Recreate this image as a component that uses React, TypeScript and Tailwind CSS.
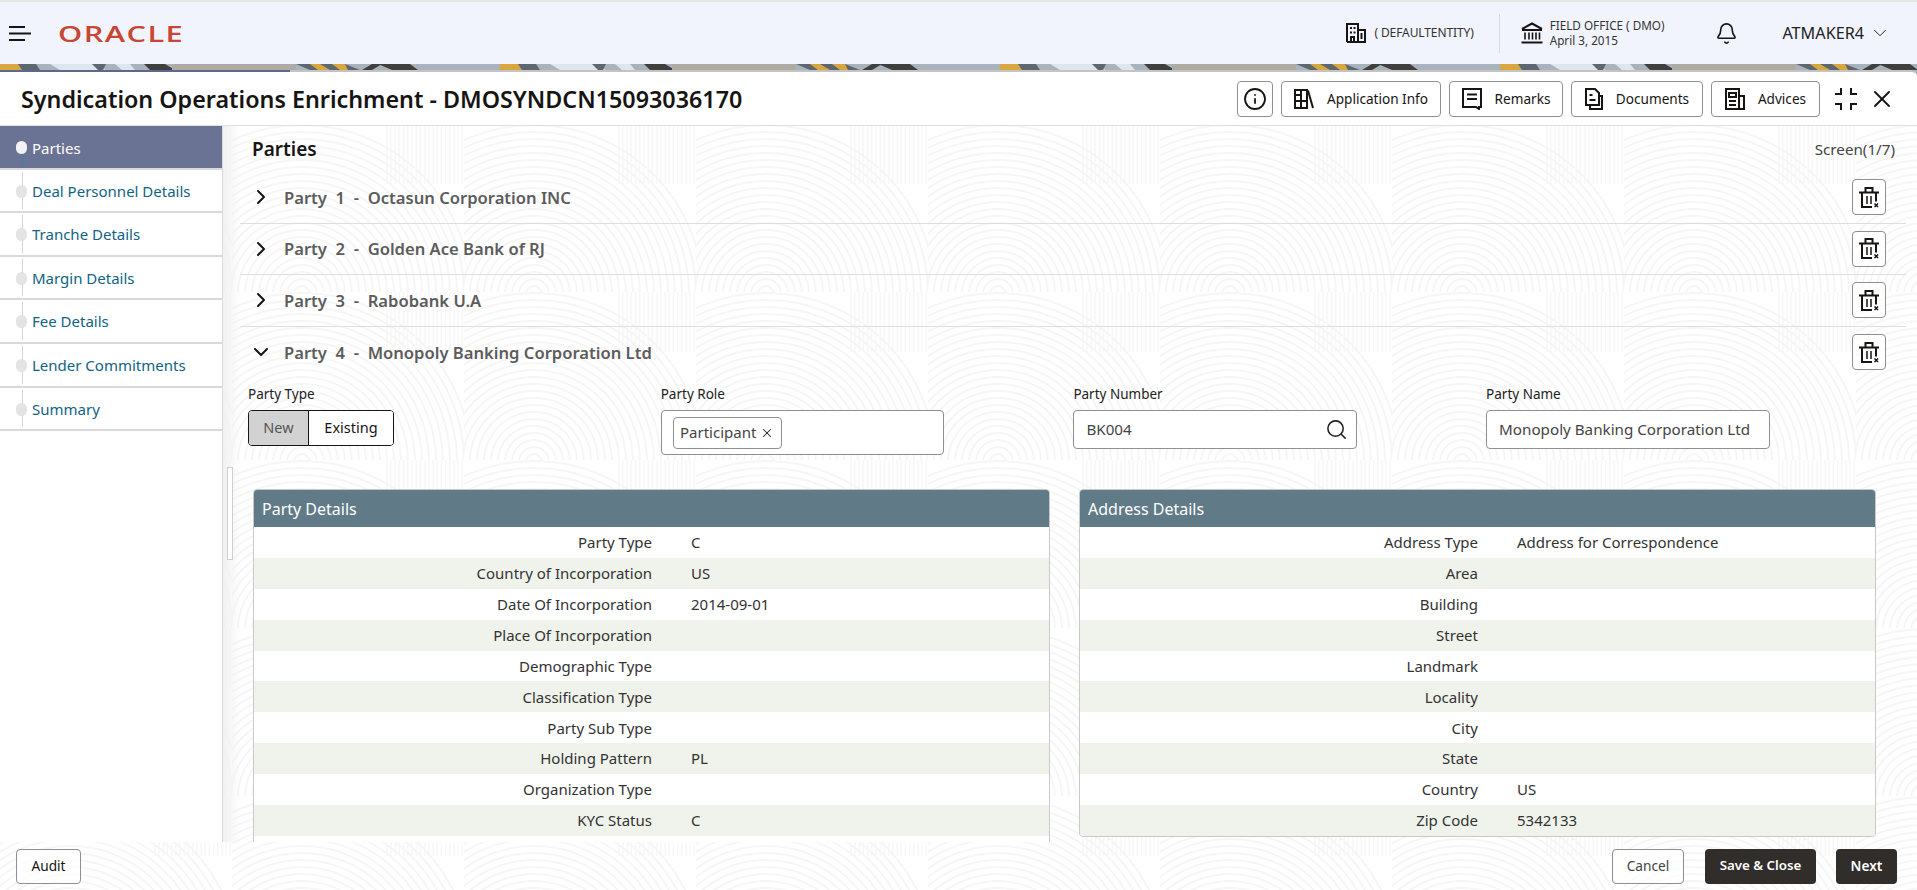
import React from 'react'
import { Bell, ChevronDown, ChevronRight, Info, Search, X } from 'lucide-react'

const radii = Array.from({ length: 24 }, (_, i) => 8 + i * 7)

// the faint fingerprint watermark behind the form
const Watermark = () => (
  <svg className="absolute inset-0 w-full h-full" aria-hidden="true">
    <defs>
      <pattern id="print" width="232" height="168" patternUnits="userSpaceOnUse" y="-2">
        <g fill="none" stroke="#f6f6f6" strokeWidth="2">
          {radii.map(r => <circle key={r} cx="70" cy="170" r={r} />)}
        </g>
        <g stroke="#f7f7f7" strokeWidth="1.5">
          {radii.map(r => <line key={r} x1={150 + r * 0.6} y1="0" x2={150 + r * 0.6} y2="60" />)}
        </g>
      </pattern>
    </defs>
    <rect width="100%" height="100%" fill="url(#print)" />
  </svg>
)

const Strip = () => (
  <svg className="w-full h-[6px] block" aria-hidden="true">
    <defs>
      <pattern id="strip" width="500" height="6" patternUnits="userSpaceOnUse">
        <rect width="500" height="6" fill="#a9b3bd" />
        <polygon points="0,0 18,0 22,6 0,6" fill="#d9a73f" />
        <polygon points="18,0 36,0 40,6 22,6" fill="#5c6770" />
        <polygon points="50,0 92,0 106,6 60,6" fill="#dbe6ef" />
        <polygon points="92,0 106,0 103,6 98,6" fill="#5c6770" />
        <polygon points="115,0 130,0 135,6 122,6" fill="#dbe6ef" />
        <polygon points="144,0 165,0 175,6 150,6" fill="#3f3f3f" />
        <rect x="172" width="124" height="6" fill="#aeaaa4" />
        <polygon points="296,0 345,0 360,6 310,6" fill="#5c6770" />
        <polygon points="310,0 320,0 330,6 318,6" fill="#d9a73f" />
        <polygon points="332,0 345,0 348,6 340,6" fill="#d9a73f" />
        <polygon points="362,6 372,0 382,0 372,6" fill="#3f3f3f" />
        <polygon points="378,0 410,0 418,6 392,6" fill="#3f3f3f" />
      </pattern>
    </defs>
    <rect width="100%" height="6" fill="url(#strip)" />
  </svg>
)

const Hamburger = () => (
  <svg width="23" height="15" viewBox="0 0 23 15" className="text-[#161513]">
    <path d="M0 1h16M0 7.5h22M0 14h16" stroke="currentColor" strokeWidth="2" />
  </svg>
)

const BuildingIcon = () => (
  <svg width="20" height="20" viewBox="0 0 20 20" fill="none" stroke="#161513" strokeWidth="2">
    <path d="M1 19V1h11v18M12 7h7v12H1M5 19v-5h3v5" />
    <path d="M4 5h2M7.5 5h2M4 9.5h2M7.5 9.5h2M15.5 10v6" />
  </svg>
)

const BankIcon = () => (
  <svg width="22" height="22" viewBox="0 0 22 22" fill="none" stroke="#161513" strokeWidth="2">
    <path d="M1 7 11 1.5 21 7" />
    <path d="M1 8h20" />
    <path d="M4 10.5v7M8 10.5v7M11.5 10.5v7M15 10.5v7M18.5 10.5v7" strokeWidth="1.6" />
    <path d="M0.5 20.5h21" />
  </svg>
)

const BooksIcon = () => (
  <svg width="20" height="20" viewBox="0 0 20 20" fill="none" stroke="#161513" strokeWidth="2">
    <path d="M1 1h12v18H1zM7 1v18M1 12h12M1 6h6" />
    <path d="M14 1.5 19 19" />
  </svg>
)

const RemarkIcon = () => (
  <svg width="20" height="22" viewBox="0 0 20 22" fill="none" stroke="#161513" strokeWidth="2">
    <path d="M1 1h18v18h-2l0 2-3-2H1z" />
    <path d="M5 6.5h10M5 11h10" />
  </svg>
)

const DocumentIcon = () => (
  <svg width="18" height="22" viewBox="0 0 18 22" fill="none" stroke="#161513" strokeWidth="2">
    <path d="M1 1h9l4 4v12H1z" />
    <path d="M14 8h3v13H5v-4" />
    <path d="M4.5 7h3M4.5 12h6" />
  </svg>
)

const AdvicesIcon = () => (
  <svg width="20" height="22" viewBox="0 0 20 22" fill="none" stroke="#161513" strokeWidth="2">
    <path d="M1 1h13v20H1zM14 8h5v13h-5" />
    <path d="M4 5h7v4H4zM4 13h7M4 17h7" />
  </svg>
)

const ExpandIcon = () => (
  <svg width="22" height="22" viewBox="0 0 22 22" fill="none" stroke="#161513" strokeWidth="2">
    <path d="M6 0v6H0M16 0v6h6M6 22v-6H0M16 22v-6h6" />
  </svg>
)

const TrashIcon = () => (
  <svg width="20" height="21" viewBox="0 0 20 21" fill="none" stroke="#161513" strokeWidth="2">
    <path d="M6.5 5V1h7v4M0 5.5h20" />
    <path d="M3 5.5V20h10M17 5.5v9" />
    <path d="M8 9v8M12 9v8" strokeWidth="1.5" />
    <path d="m15.5 16.5 3.5 3.5m0-3.5L15.5 20" strokeWidth="1.5" />
  </svg>
)

const ToolButton = ({ icon, label, className }: { icon: React.ReactNode, label: string, className: string }) => (
  <button className={`h-9 flex items-center justify-center gap-[13px] bg-white border border-[#8f8f8f] rounded-[4px] text-[13.6px] text-[#161513] ${className}`}>
    {icon}
    <span className="pt-[2px]">{label}</span>
  </button>
)

const steps = ['Parties', 'Deal Personnel Details', 'Tranche Details', 'Margin Details', 'Fee Details', 'Lender Commitments', 'Summary']

const Sidebar = () => (
  <aside className="relative z-10 w-[223px] shrink-0 bg-white border-r border-[#dcdcdc]">
    {steps.map((step, i) => (
      <div
        key={step}
        className={`relative h-[43.6px] flex items-center pl-8 border-b-2 border-[#d9d9d9] text-[15px] ${i === 0 ? 'bg-[#6b7394] text-white pt-[2px]' : 'text-[#0f6384] pt-px'}`}
      >
        <span className={`absolute left-[22px] top-[2px] bottom-[2px] w-px ${i === 0 ? 'bg-[#2f86b5] top-[24px]' : 'bg-[#d4d4d4]'}`} />
        <span className={`absolute left-[16px] top-[15px] w-[11px] h-[13px] rounded-full ${i === 0 ? 'bg-[#f2f2f2]' : 'bg-[#e4e4e4]'}`} />
        <span className="relative">{step}</span>
      </div>
    ))}
  </aside>
)

const parties = [
  { no: 1, name: 'Octasun Corporation INC' },
  { no: 2, name: 'Golden Ace Bank of RJ' },
  { no: 3, name: 'Rabobank U.A' },
  { no: 4, name: 'Monopoly Banking Corporation Ltd' },
]

const PartyRow = ({ no, name, open }: { no: number, name: string, open: boolean }) => (
  <div className={`h-[51.5px] flex items-center pl-[9px] pr-5 ${open ? '' : 'border-b border-[#dedede]'}`}>
    <span className="w-[35px] flex justify-start">
      {open
        ? <ChevronDown size={24} strokeWidth={2} className="text-[#161513]" />
        : <ChevronRight size={24} strokeWidth={2} className="text-[#161513]" />}
    </span>
    <span className="flex-1 pt-[2px] text-[16.6px] font-semibold text-[#5c5c5c] whitespace-pre">{`Party  ${no}  -  ${name}`}</span>
    <button className="w-[34px] h-9 flex items-center justify-center bg-white/60 border border-[#8f8f8f] rounded-[4px]">
      <TrashIcon />
    </button>
  </div>
)

const partyDetails = [
  ['Party Type', 'C'],
  ['Country of Incorporation', 'US'],
  ['Date Of Incorporation', '2014-09-01'],
  ['Place Of Incorporation', ''],
  ['Demographic Type', ''],
  ['Classification Type', ''],
  ['Party Sub Type', ''],
  ['Holding Pattern', 'PL'],
  ['Organization Type', ''],
  ['KYC Status', 'C'],
  ['', ''],
]

const addressDetails = [
  ['Address Type', 'Address for Correspondence'],
  ['Area', ''],
  ['Building', ''],
  ['Street', ''],
  ['Landmark', ''],
  ['Locality', ''],
  ['City', ''],
  ['State', ''],
  ['Country', 'US'],
  ['Zip Code', '5342133'],
]

const DetailsCard = ({ title, rows, className }: { title: string, rows: string[][], className: string }) => (
  <div className={`w-[797px] border border-[#c9c9c9] rounded-[4px] bg-white overflow-hidden ${className}`}>
    <div className="h-[37px] flex items-center pl-2 bg-[#607a88] text-white text-[16px]">{title}</div>
    {rows.map((row, i) => (
      <div key={i} className={`h-[30.9px] flex items-center text-[15px] text-[#333] ${i % 2 === 1 ? 'bg-[#f0f3ec]' : 'bg-white'}`}>
        <span className="w-[398px] text-right">{row[0]}</span>
        <span className="pl-[39px]">{row[1]}</span>
      </div>
    ))}
  </div>
)

const Label = ({ children }: { children: React.ReactNode }) => (
  <div className="h-[32px] pt-2 text-[13.5px] leading-[16px] text-[#222]">{children}</div>
)

const App = () => {
  return (
    <div className="h-screen flex flex-col overflow-hidden bg-[#a9b3bd] font-['Noto_Sans',sans-serif] text-[#161513]">
      <header className="h-[64px] shrink-0 border-t-2 border-[#e6e6e6] bg-[#f1f4fd] flex items-center pl-[9px]">
        <Hamburger />
        <span className="ml-[26px] inline-block origin-left scale-x-[1.4] font-['Open_Sans',sans-serif] text-[22px] leading-none font-semibold tracking-[1px] text-[#c74634]">ORACLE</span>
        <div className="ml-auto flex items-center h-full">
          <BuildingIcon />
          <span className="ml-2 text-[12px] tracking-[-0.1px] text-[#333]">( DEFAULTENTITY)</span>
          <span className="ml-[25px] w-px h-[39px] bg-[#d9d9d9]" />
          <span className="ml-[21px]"><BankIcon /></span>
          <div className="ml-[7px] text-[11.7px] leading-[15px] text-[#333]">
            <div>FIELD OFFICE ( DMO)</div>
            <div>April 3, 2015</div>
          </div>
          <Bell size={23} strokeWidth={1.7} className="ml-[51px]" />
          <span className="ml-[44px] text-[16.2px] text-[#222]">ATMAKER4</span>
          <ChevronDown size={22} strokeWidth={1} className="ml-[5px] mr-[26px]" />
        </div>
      </header>
      <Strip />
      <div className="relative flex-1 min-h-0 flex flex-col bg-white rounded-tr-md border-t-2 border-[#c4c4c4]">
        <span className="absolute -top-[2px] left-0 w-[290px] h-[2px] bg-[#5f6889]" />
        <div className="h-[54px] shrink-0 flex items-center pl-[21px] pr-[21px] border-b border-[#dfdfdf]">
          <h1 className="pt-[2px] text-[23.3px] font-semibold text-[#161513]">Syndication Operations Enrichment - DMOSYNDCN15093036170</h1>
          <div className="ml-auto flex items-center gap-2">
            <button className="w-9 h-9 flex items-center justify-center bg-white border border-[#8f8f8f] rounded-[4px]">
              <Info size={24} strokeWidth={1.8} />
            </button>
            <ToolButton icon={<BooksIcon />} label="Application Info" className="w-[160px]" />
            <ToolButton icon={<RemarkIcon />} label="Remarks" className="w-[114px]" />
            <ToolButton icon={<DocumentIcon />} label="Documents" className="w-[132px]" />
            <ToolButton icon={<AdvicesIcon />} label="Advices" className="w-[109px]" />
            <span className="ml-[7px]"><ExpandIcon /></span>
            <X size={28} strokeWidth={1.6} className="ml-[3px]" />
          </div>
        </div>

        <div className="relative flex-1 min-h-0 flex flex-col">
          <Watermark />
          <div className="relative flex-1 min-h-0 flex">
            <Sidebar />
            <main className="relative flex-1 min-w-0 overflow-hidden">
              <span className="absolute left-0 inset-y-0 w-[18px] bg-gradient-to-r from-[#f1f1f1] to-transparent" />
              <span className="absolute left-[4px] top-[341px] w-[6px] h-[93px] border border-[#cfcfcf] bg-white" />
              <div className="relative h-[46px] flex items-center justify-between pl-[29px] pr-[22px]">
                <h2 className="text-[19px] font-semibold">Parties</h2>
                <span className="text-[15.2px] text-[#444]">Screen(1/7)</span>
              </div>
              <div className="relative ml-[17px] mr-[11px]">
                {parties.map((p, i) => <PartyRow key={p.no} no={p.no} name={p.name} open={i === 3} />)}
              </div>
              <div className="relative pl-[25px] grid grid-cols-[repeat(4,412.7px)]">
                <div>
                  <Label>Party Type</Label>
                  <div className="w-[146px] h-9 flex border border-[#161513] rounded-[4px] overflow-hidden text-[14.5px]">
                    <span className="w-[60px] flex items-center justify-center bg-[#d2d2d2] border-r border-[#161513] text-[#555]">New</span>
                    <span className="flex-1 flex items-center justify-center bg-white">Existing</span>
                  </div>
                </div>
                <div>
                  <Label>Party Role</Label>
                  <div className="w-[283px] h-[45px] flex items-center pl-[11px] bg-white border border-[#8f8f8f] rounded-[4px]">
                    <span className="h-[32px] w-[109px] flex items-center justify-center gap-1 border border-[#8f8f8f] rounded-[4px] text-[15px] text-[#444]">
                      Participant
                      <X size={14} strokeWidth={1.8} className="text-[#222]" />
                    </span>
                  </div>
                </div>
                <div>
                  <Label>Party Number</Label>
                  <div className="w-[284px] h-[39px] flex items-center justify-between pl-3 pr-2 bg-white border border-[#8f8f8f] rounded-[4px] text-[15.2px] text-[#444]">
                    BK004
                    <Search size={23} strokeWidth={1.6} className="text-[#222]" />
                  </div>
                </div>
                <div>
                  <Label>Party Name</Label>
                  <div className="w-[284px] h-[39px] flex items-center pl-3 bg-white border border-[#8f8f8f] rounded-[4px] text-[15.2px] text-[#444] whitespace-nowrap">
                    Monopoly Banking Corporation Ltd
                  </div>
                </div>
              </div>
              <div className="relative mt-[34px] pl-[30px] flex gap-[29px] items-start">
                <DetailsCard title="Party Details" rows={partyDetails} className="rounded-b-none" />
                <DetailsCard title="Address Details" rows={addressDetails} className="" />
              </div>
            </main>
          </div>
          <footer className="relative h-[48px] shrink-0 flex items-center pl-4 pr-5 gap-[21px] text-[13.7px]">
            <button className="w-[65px] h-[35px] bg-white/70 border border-[#8f8f8f] rounded-[4px] mr-auto">Audit</button>
            <button className="w-[72px] h-[35px] bg-white/70 border border-[#8f8f8f] rounded-[4px] text-[#444]">Cancel</button>
            <button className="w-[111px] h-[35px] bg-[#312d2a] rounded-[4px] text-white font-semibold text-[13.3px]">Save &amp; Close</button>
            <button className="w-[61px] h-[35px] -ml-[1px] bg-[#312d2a] rounded-[4px] text-white font-semibold">Next</button>
          </footer>
        </div>
      </div>
    </div>
  )
}

export default App
